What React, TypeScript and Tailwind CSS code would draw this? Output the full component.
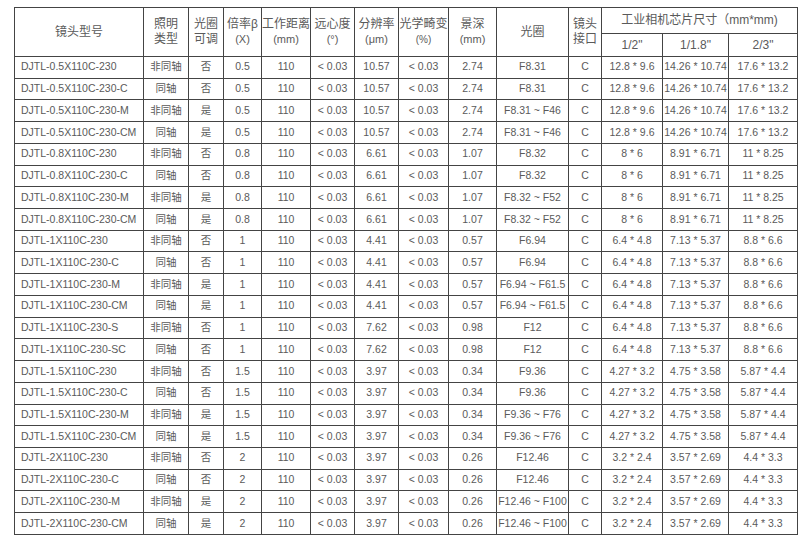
import React from "react";

type Row = string[];

// model, light, iris, mag, wd, tele, res, dist, dof, aperture, mount, 1/2", 1/1.8", 2/3"
const groups = [
  { mag: "0.5", model: "DJTL-0.5X110C-230", res: "10.57", dof: "2.74", f: "F8.31", fr: "F8.31 ~ F46", s: ["12.8 * 9.6", "14.26 * 10.74", "17.6 * 13.2"] },
  { mag: "0.8", model: "DJTL-0.8X110C-230", res: "6.61", dof: "1.07", f: "F8.32", fr: "F8.32 ~ F52", s: ["8 * 6", "8.91 * 6.71", "11 * 8.25"] },
  { mag: "1", model: "DJTL-1X110C-230", res: "4.41", dof: "0.57", f: "F6.94", fr: "F6.94 ~ F61.5", s: ["6.4 * 4.8", "7.13 * 5.37", "8.8 * 6.6"] },
  { mag: "1.5", model: "DJTL-1.5X110C-230", res: "3.97", dof: "0.34", f: "F9.36", fr: "F9.36 ~ F76", s: ["4.27 * 3.2", "4.75 * 3.58", "5.87 * 4.4"] },
  { mag: "2", model: "DJTL-2X110C-230", res: "3.97", dof: "0.26", f: "F12.46", fr: "F12.46 ~ F100", s: ["3.2 * 2.4", "3.57 * 2.69", "4.4 * 3.3"] },
];

const rows: Row[] = [];
groups.forEach((g) => {
  const base = (suffix: string, light: string, iris: string, ap: string): Row => [
    g.model + suffix, light, iris, g.mag, "110", "< 0.03", g.res, "< 0.03", g.dof, ap, "C", ...g.s,
  ];
  rows.push(base("", "非同轴", "否", g.f));
  rows.push(base("-C", "同轴", "否", g.f));
  rows.push(base("-M", "非同轴", "是", g.fr));
  rows.push(base("-CM", "同轴", "是", g.fr));
  if (g.mag === "1") {
    rows.push(["DJTL-1X110C-230-S", "非同轴", "否", "1", "110", "< 0.03", "7.62", "< 0.03", "0.98", "F12", "C", ...g.s]);
    rows.push(["DJTL-1X110C-230-SC", "同轴", "否", "1", "110", "< 0.03", "7.62", "< 0.03", "0.98", "F12", "C", ...g.s]);
  }
});

const widths = [129, 45, 35, 38, 49, 44, 44, 50, 48, 72, 33, 61, 66, 69];

const th = "border border-[#444] font-normal text-[12px] leading-[15px] text-[#5a5a5a] align-middle text-center p-0";
const td = "border border-[#444] text-[10.5px] text-[#5a5a5a] text-center p-0 whitespace-nowrap overflow-hidden";

export default function App() {
  return (
    <div className="w-[800px] h-[540px] bg-white overflow-hidden pt-[7px] pl-[14px]" style={{ fontFamily: '"Liberation Sans", "Noto Sans CJK SC", sans-serif' }}>
      <table className="table-fixed border-collapse w-[784px]">
        <colgroup>
          {widths.map((w, i) => (
            <col key={i} style={{ width: w }} />
          ))}
        </colgroup>
        <thead>
          <tr className="h-[26px]">
            <th rowSpan={2} className={th}>镜头型号</th>
            <th rowSpan={2} className={th}>照明<br />类型</th>
            <th rowSpan={2} className={th}>光圈<br />可调</th>
            <th rowSpan={2} className={th}>倍率β<br /><span className="text-[11px]">(X)</span></th>
            <th rowSpan={2} className={th}>工作距离<br /><span className="text-[11px]">(mm)</span></th>
            <th rowSpan={2} className={th}>远心度<br /><span className="text-[11px]">(°)</span></th>
            <th rowSpan={2} className={th}>分辨率<br /><span className="text-[11px]">(μm)</span></th>
            <th rowSpan={2} className={th}>光学畸变<br /><span className="text-[10px]">(%)</span></th>
            <th rowSpan={2} className={th}>景深<br /><span className="text-[11px]">(mm)</span></th>
            <th rowSpan={2} className={th}>光圈</th>
            <th rowSpan={2} className={th}>镜头<br />接口</th>
            <th colSpan={3} className={th}>工业相机芯片尺寸（mm*mm)</th>
          </tr>
          <tr className="h-[23px]">
            <th className={th + " text-[11px]"}>1/2"</th>
            <th className={th + " text-[11px]"}>1/1.8"</th>
            <th className={th + " text-[11px]"}>2/3"</th>
          </tr>
        </thead>
        <tbody>
          {rows.map((r, i) => (
            <tr key={i} className="h-[21.73px]">
              {r.map((c, j) => (
                <td key={j} className={j === 0 ? td + " text-left pl-[6px]" : td}>
                  {c}
                </td>
              ))}
            </tr>
          ))}
        </tbody>
      </table>
    </div>
  );
}
